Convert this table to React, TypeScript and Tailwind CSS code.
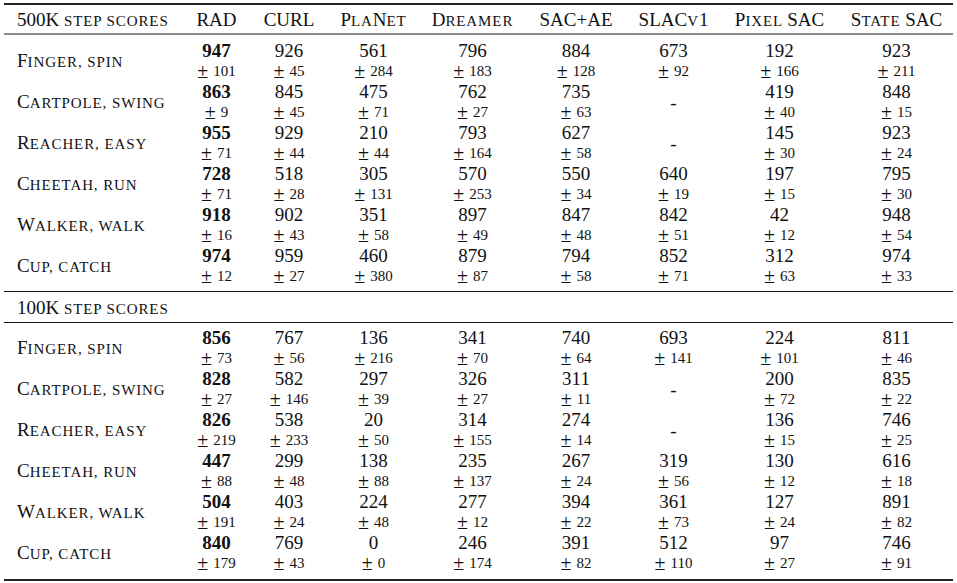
import React from "react";

type Cell = [string, string] | null;
type Row = { name: string; cells: Cell[] };

const cols = ["RAD", "CURL", "PlaNet", "Dreamer", "SAC+AE", "SLACv1", "Pixel SAC", "State SAC"];

const r500: Row[] = [
  { name: "Finger, spin", cells: [["947", "101"], ["926", "45"], ["561", "284"], ["796", "183"], ["884", "128"], ["673", "92"], ["192", "166"], ["923", "211"]] },
  { name: "Cartpole, swing", cells: [["863", "9"], ["845", "45"], ["475", "71"], ["762", "27"], ["735", "63"], null, ["419", "40"], ["848", "15"]] },
  { name: "Reacher, easy", cells: [["955", "71"], ["929", "44"], ["210", "44"], ["793", "164"], ["627", "58"], null, ["145", "30"], ["923", "24"]] },
  { name: "Cheetah, run", cells: [["728", "71"], ["518", "28"], ["305", "131"], ["570", "253"], ["550", "34"], ["640", "19"], ["197", "15"], ["795", "30"]] },
  { name: "Walker, walk", cells: [["918", "16"], ["902", "43"], ["351", "58"], ["897", "49"], ["847", "48"], ["842", "51"], ["42", "12"], ["948", "54"]] },
  { name: "Cup, catch", cells: [["974", "12"], ["959", "27"], ["460", "380"], ["879", "87"], ["794", "58"], ["852", "71"], ["312", "63"], ["974", "33"]] },
];

const r100: Row[] = [
  { name: "Finger, spin", cells: [["856", "73"], ["767", "56"], ["136", "216"], ["341", "70"], ["740", "64"], ["693", "141"], ["224", "101"], ["811", "46"]] },
  { name: "Cartpole, swing", cells: [["828", "27"], ["582", "146"], ["297", "39"], ["326", "27"], ["311", "11"], null, ["200", "72"], ["835", "22"]] },
  { name: "Reacher, easy", cells: [["826", "219"], ["538", "233"], ["20", "50"], ["314", "155"], ["274", "14"], null, ["136", "15"], ["746", "25"]] },
  { name: "Cheetah, run", cells: [["447", "88"], ["299", "48"], ["138", "88"], ["235", "137"], ["267", "24"], ["319", "56"], ["130", "12"], ["616", "18"]] },
  { name: "Walker, walk", cells: [["504", "191"], ["403", "24"], ["224", "48"], ["277", "12"], ["394", "22"], ["361", "73"], ["127", "24"], ["891", "82"]] },
  { name: "Cup, catch", cells: [["840", "179"], ["769", "43"], ["0", "0"], ["246", "174"], ["391", "82"], ["512", "110"], ["97", "27"], ["746", "91"]] },
];

const grid = "grid grid-cols-[179px_67px_78px_91px_107px_100px_95px_117px_117px]";

// Manual small caps: lowercase letters become uppercase at a smaller size
function SC({ text }: { text: string }) {
  const runs: { small: boolean; s: string }[] = [];
  for (const ch of text) {
    const small = /[a-z]/.test(ch) || ((ch === "," || ch === " ") && runs.length > 0);
    const last = runs[runs.length - 1];
    if (last && last.small === small) last.s += ch;
    else runs.push({ small, s: ch });
  }
  return (
    <span className="whitespace-pre">
      {runs.map((r, i) =>
        r.small ? (
          <span key={i} className="text-[15px] tracking-[0.9px] uppercase">{r.s}</span>
        ) : (
          <span key={i} className="text-[19px]">{r.s}</span>
        )
      )}
    </span>
  );
}

function DataRow({ row }: { row: Row }) {
  return (
    <div className={`${grid} h-[41px]`}>
      <div className="flex items-center pl-[13px] leading-none">
        <SC text={row.name} />
      </div>
      {row.cells.map((c, i) => (
        <div key={i} className="flex flex-col items-center justify-center">
          {c ? (
            <>
              <div className={`h-[21px] flex items-center text-[19px] leading-none ${i === 0 ? "font-bold" : ""}`}>{c[0]}</div>
              <div className="h-[20px] flex items-center leading-none">
                <span className="text-[20px]">±</span>
                <span className="text-[15px] ml-[5px]">{c[1]}</span>
              </div>
            </>
          ) : (
            <div className="text-[19px] leading-none mt-[2px]">-</div>
          )}
        </div>
      ))}
    </div>
  );
}

export default function App() {
  return (
    <div className="w-[957px] h-[583px] bg-white text-[#111] font-['Liberation_Serif',serif] overflow-hidden">
      <div className="ml-[4px] w-[949px] pt-[3px]">
        <div className="h-[2px] bg-[#222]" />
        <div className={`${grid} h-[28px] items-center text-[19px] leading-none`}>
          <div className="pl-[13px] whitespace-nowrap">
            <SC text="500K step scores" />
          </div>
          {cols.map((c) => (
            <div key={c} className="text-center whitespace-nowrap">
              <SC text={c} />
            </div>
          ))}
        </div>
        <div className="h-[2px] bg-[#8c8c8c]" />
        <div className="h-[5px]" />
        {r500.map((r) => (
          <DataRow key={r.name} row={r} />
        ))}
        <div className="h-[5px]" />
        <div className="h-[1px] bg-[#111]" />
        <div className="h-[30px] flex items-center pl-[13px] leading-none">
          <SC text="100K step scores" />
        </div>
        <div className="h-[1px] bg-[#111]" />
        <div className="h-[4px]" />
        {r100.map((r) => (
          <DataRow key={r.name} row={r} />
        ))}
        <div className="h-[6px]" />
        <div className="h-[2px] bg-[#222]" />
      </div>
    </div>
  );
}
